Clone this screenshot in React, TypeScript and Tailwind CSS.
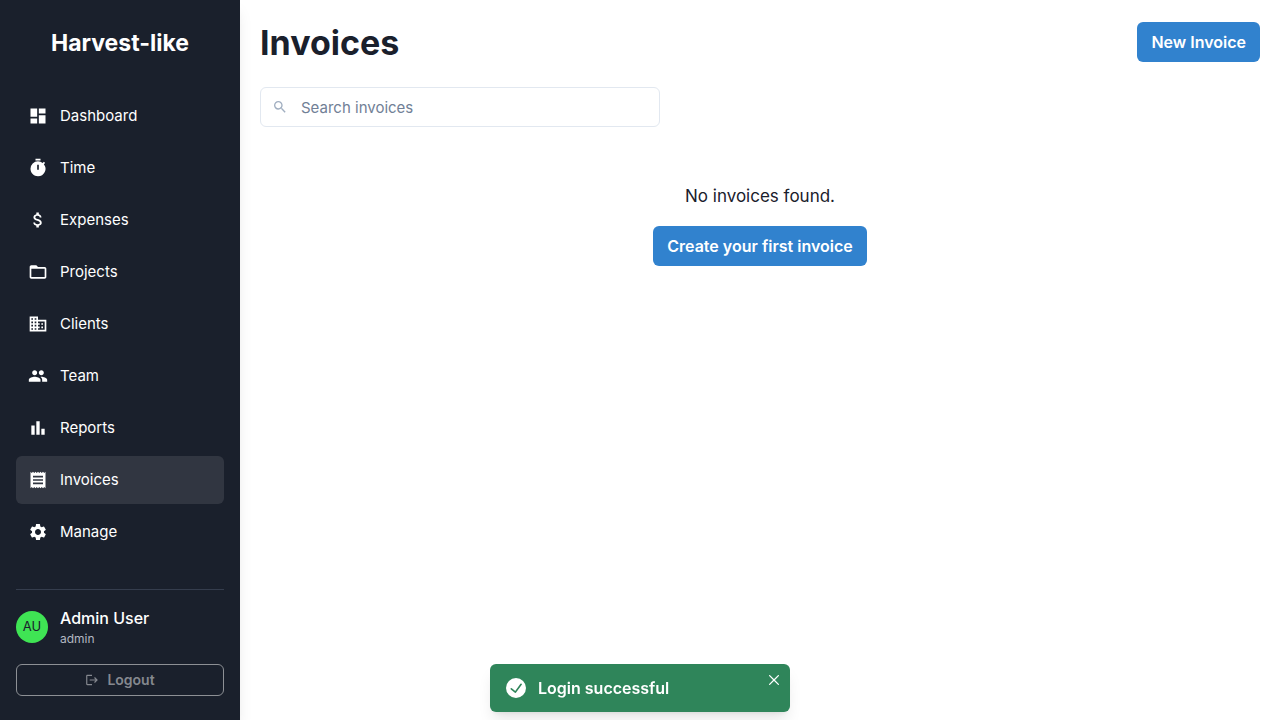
import { useState } from "react";
import type { IconType } from "react-icons";
import {
  MdAttachMoney,
  MdBarChart,
  MdBusiness,
  MdDashboard,
  MdFolderOpen,
  MdLogout,
  MdPeople,
  MdReceipt,
  MdSearch,
  MdSettings,
  MdTimer,
} from "react-icons/md";

const navItems: { label: string; icon: IconType }[] = [
  { label: "Dashboard", icon: MdDashboard },
  { label: "Time", icon: MdTimer },
  { label: "Expenses", icon: MdAttachMoney },
  { label: "Projects", icon: MdFolderOpen },
  { label: "Clients", icon: MdBusiness },
  { label: "Team", icon: MdPeople },
  { label: "Reports", icon: MdBarChart },
  { label: "Invoices", icon: MdReceipt },
  { label: "Manage", icon: MdSettings },
];

function CheckCircle() {
  return (
    <svg viewBox="0 0 24 24" className="size-5 fill-current" aria-hidden="true">
      <path d="M12,0A12,12,0,1,0,24,12,12.014,12.014,0,0,0,12,0Zm6.927,8.2-6.845,9.289a1.011,1.011,0,0,1-1.43.188L5.764,13.769a1,1,0,1,1,1.25-1.562l4.076,3.261,6.227-8.451A1,1,0,1,1,18.927,8.2Z" />
    </svg>
  );
}

function CloseIcon() {
  return (
    <svg viewBox="0 0 24 24" className="size-[10px] fill-current" aria-hidden="true">
      <path d="M.439,21.44a1.5,1.5,0,0,0,2.122,2.121L11.823,14.3a.25.25,0,0,1,.354,0l9.262,9.263a1.5,1.5,0,1,0,2.122-2.121L14.3,12.177a.25.25,0,0,1,0-.354l9.263-9.262A1.5,1.5,0,0,0,21.439.44L12.177,9.7a.25.25,0,0,1-.354,0L2.561.44A1.5,1.5,0,0,0,.439,2.561L9.7,11.823a.25.25,0,0,1,0,.354Z" />
    </svg>
  );
}

function Sidebar() {
  return (
    <aside className="sticky top-0 flex h-screen w-60 shrink-0 flex-col bg-[#1a202c] px-4 pt-6 pb-6 text-white shadow-lg">
      <p className="text-center text-[23px] leading-[38px] font-bold">Harvest-like</p>
      <nav aria-label="Main" className="mt-[30px] flex flex-col gap-1">
        {navItems.map(({ label, icon: Icon }) => {
          const active = label === "Invoices";
          return (
            <a
              key={label}
              href={`#${label.toLowerCase()}`}
              aria-current={active ? "page" : undefined}
              className={
                active
                  ? "flex h-12 items-center gap-3 rounded-md bg-white/10 px-3 text-[15px]"
                  : "flex h-12 items-center gap-3 rounded-md px-3 text-[15px]"
              }
            >
              <Icon className="size-5" aria-hidden="true" />
              {label}
            </a>
          );
        })}
      </nav>
      <div className="mt-auto border-t border-[#353d4d] pt-4">
        <div className="flex items-center gap-3">
          <span className="flex size-8 items-center justify-center rounded-full bg-[#3fe454] text-[13px] text-[#1a202c]">
            AU
          </span>
          <div>
            <p className="leading-6 font-medium">Admin User</p>
            <p className="text-xs leading-[18px] text-[#b3b8c2]">admin</p>
          </div>
        </div>
        <button
          type="button"
          className="mt-4 flex h-8 w-full items-center justify-center gap-2 rounded-md border border-[#8d9095] text-sm font-semibold text-[#85888f]"
        >
          <MdLogout className="size-[14px]" aria-hidden="true" />
          Logout
        </button>
      </div>
    </aside>
  );
}

function Toast({ onClose }: { onClose: () => void }) {
  return (
    <div className="pointer-events-none fixed inset-x-0 bottom-2 flex justify-center">
      <div
        role="status"
        className="pointer-events-auto relative flex min-w-[300px] items-center gap-3 rounded-md bg-[#2f855a] py-3 pr-8 pl-4 font-semibold text-white shadow-lg"
      >
        <CheckCircle />
        Login successful
        <button
          type="button"
          aria-label="Close"
          onClick={onClose}
          className="absolute top-1 right-1 flex size-6 items-center justify-center rounded-md"
        >
          <CloseIcon />
        </button>
      </div>
    </div>
  );
}

export default function App() {
  const [toastOpen, setToastOpen] = useState(true);
  const [query, setQuery] = useState("");

  return (
    <div className="flex min-h-screen bg-white font-['Inter',sans-serif] text-base text-[#1a202c]">
      <Sidebar />
      <main className="min-w-0 flex-1 p-5">
        <header className="mb-6 flex items-center justify-between">
          <h1 className="pt-[3px] text-[34px] leading-10 font-bold">Invoices</h1>
          <button type="button" className="h-10 rounded-md bg-[#3182ce] px-[14px] font-semibold text-white">
            New Invoice
          </button>
        </header>
        <div className="flex h-10 max-w-[400px] items-center rounded-md border border-[#e2e8f0]">
          <label htmlFor="invoice-search" aria-label="Search invoices" className="flex w-10 shrink-0 justify-center pr-0.5 text-[#a0aec0]">
            <MdSearch className="size-4" aria-hidden="true" />
          </label>
          <input
            id="invoice-search"
            type="text"
            value={query}
            onChange={(event) => setQuery(event.target.value)}
            placeholder="Search invoices"
            className="h-full min-w-0 flex-1 bg-transparent pr-4 text-[15px] outline-none placeholder:text-[#718096]"
          />
        </div>
        <section className="mt-6 flex flex-col items-center gap-4 py-8">
          <p className="text-[17px] leading-[27px]">No invoices found.</p>
          <button type="button" className="h-10 rounded-md bg-[#3182ce] px-[14px] font-semibold text-white">
            Create your first invoice
          </button>
        </section>
      </main>
      {toastOpen && <Toast onClose={() => setToastOpen(false)} />}
    </div>
  );
}
